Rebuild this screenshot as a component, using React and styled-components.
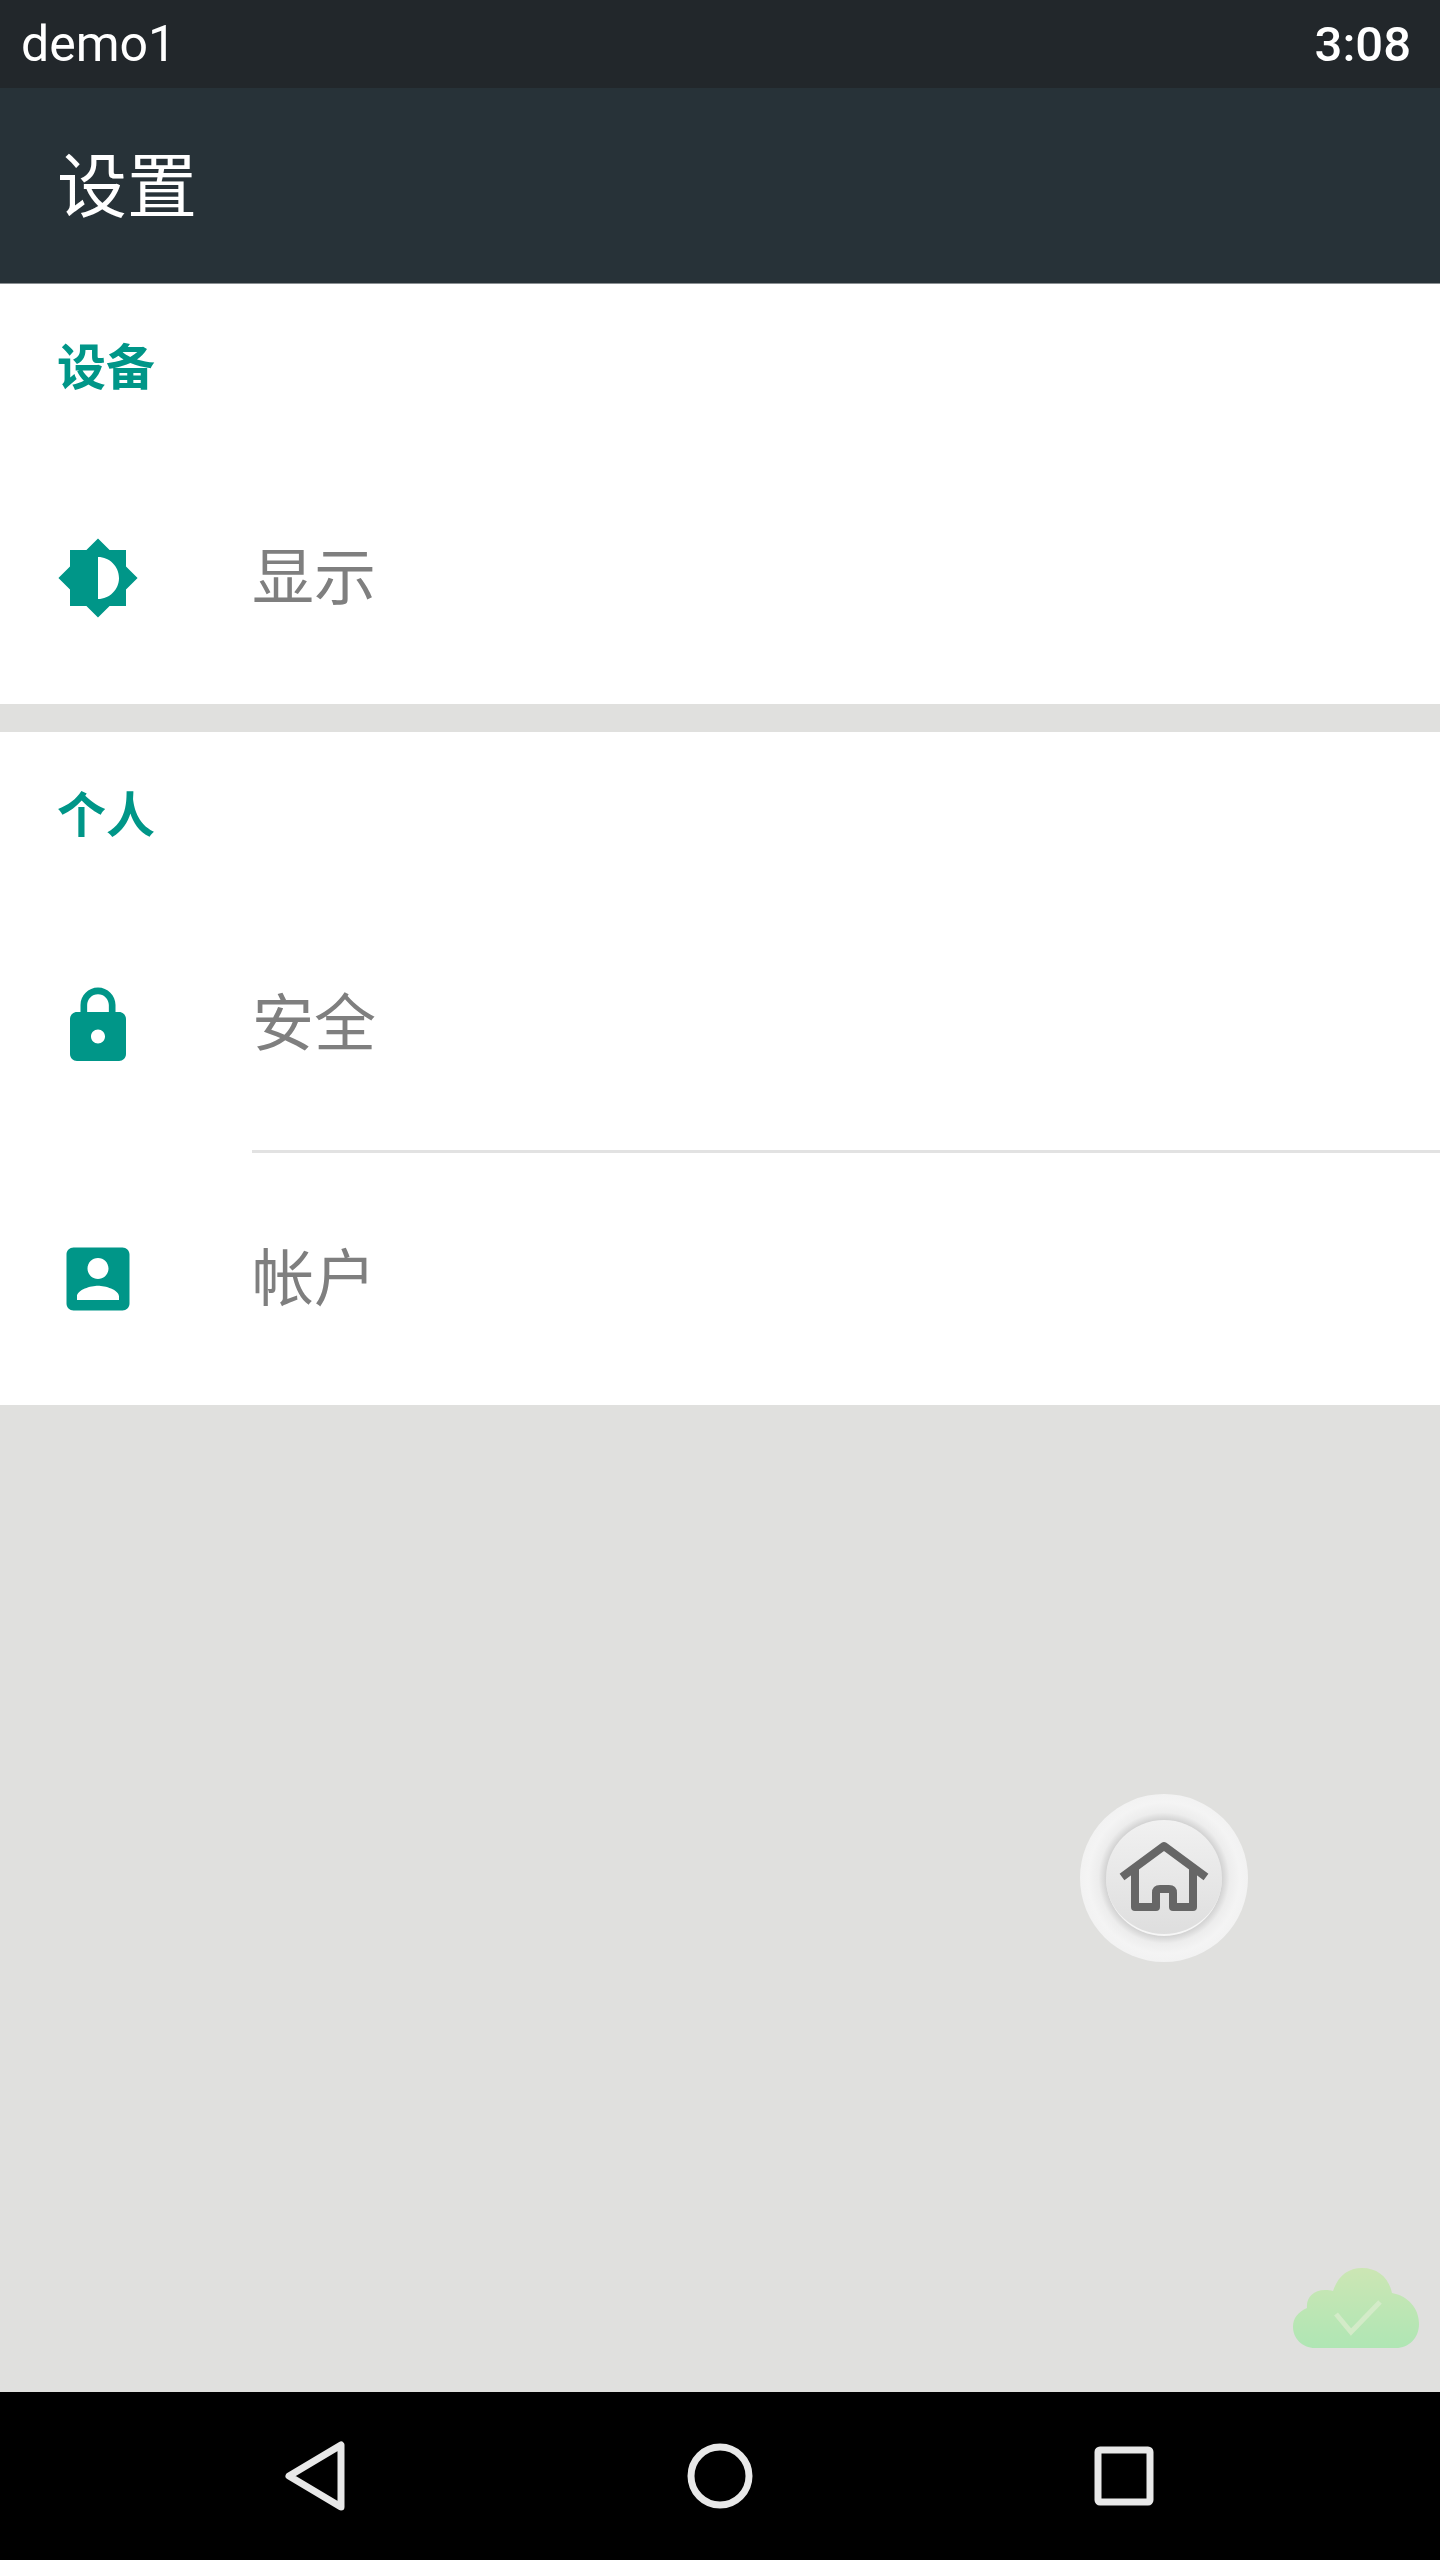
import React from 'react'
import styled, { createGlobalStyle } from 'styled-components'

const GlobalStyle = createGlobalStyle`
  html, body {
    margin: 0;
    padding: 0;
    background: #e0e0de;
  }
`

const Screen = styled.div`
  display: flex;
  flex-direction: column;
  width: 1440px;
  height: 2560px;
  overflow: hidden;
  background: #e0e0de;
  font-family: "Noto Sans CJK SC", Roboto, sans-serif;
`
const StatusBar = styled.div`
  display: flex;
  align-items: center;
  justify-content: space-between;
  height: 88px;
  padding: 0 29px 0 21px;
  box-sizing: border-box;
  background: #22272b;
  color: #fff;
  font-family: Roboto, sans-serif;
  font-size: 50px;
`
const Clock = styled.span`
  font-weight: 500;
  font-size: 49px;
`
const Toolbar = styled.header`
  display: flex;
  align-items: center;
  height: 196px;
  padding: 0 57px 7px;
  box-sizing: border-box;
  background: #273238;
  border-bottom: 1px solid #8a8f92;
`
const Title = styled.h1`
  margin: 0;
  color: #fff;
  font-size: 70px;
  font-weight: 400;
  line-height: 1;
`
const Content = styled.main`
  position: relative;
  flex: 1;
  display: flex;
  flex-direction: column;
  gap: 28px;
`
const Section = styled.section`
  background: #fff;
`
const SectionHeader = styled.h2`
  margin: 0;
  height: ${p => p.$height}px;
  padding: 50px 57px 0;
  box-sizing: border-box;
  color: #009688;
  font-size: 49px;
  font-weight: 700;
  line-height: 60px;
`
const Row = styled.div`
  display: flex;
  align-items: center;
  gap: 112px;
  height: 252px;
  padding-left: 56px;
`
const RowIcon = styled.svg`
  width: 84px;
  height: 84px;
  flex: none;
  fill: #009688;
  margin-top: ${p => p.$nudge || 0}px;
`
const RowLabel = styled.span`
  padding-bottom: 10px;
  color: #7f7f7f;
  font-size: 62px;
  line-height: 1;
`
const Divider = styled.div`
  height: 3px;
  margin-left: 252px;
  background: #e2e2e2;
`
const FloatingHome = styled.div`
  position: absolute;
  left: 1080px;
  top: 1510px;
  width: 168px;
  height: 168px;
  display: flex;
  align-items: center;
  justify-content: center;
  border-radius: 50%;
  background: radial-gradient(circle closest-side, #cfcfcf 0%, #d2d2d2 69%, #ededed 78%, #f4f4f4 90%, #f2f2f2 100%);
`
const HomeButton = styled.div`
  width: 116px;
  height: 116px;
  display: flex;
  align-items: center;
  justify-content: center;
  border-radius: 50%;
  box-sizing: border-box;
  border-bottom: 2px solid #f6f6f6;
  background: linear-gradient(#f1f1f1, #dedede);
`
const HomeIcon = styled.svg`
  width: 92px;
  height: 76px;
  fill: none;
  stroke: #666;
  stroke-width: 8;
  stroke-linejoin: round;
  stroke-linecap: butt;
`
const CloudBadge = styled.svg`
  position: absolute;
  left: 1293px;
  top: 1984px;
  width: 126px;
  height: 80px;
`
const NavBar = styled.nav`
  display: flex;
  align-items: center;
  justify-content: center;
  height: 168px;
  background: #000;
`
const NavItem = styled.div`
  display: flex;
  justify-content: center;
  width: 404px;
`
const NavIcon = styled.svg`
  width: 72px;
  height: 72px;
  fill: none;
  stroke: #e8e8e8;
  stroke-width: 7;
  stroke-linejoin: round;
`

const App = () => {
  return (
    <Screen>
      <GlobalStyle />
      <StatusBar>
        <span>demo1</span>
        <Clock>3:08</Clock>
      </StatusBar>
      <Toolbar>
        <Title>设置</Title>
      </Toolbar>
      <Content>
        <Section>
          <SectionHeader $height={168}>设备</SectionHeader>
          <Row>
            <RowIcon viewBox="0 0 24 24">
              <path d="M20 15.31L23.31 12 20 8.69V4h-4.69L12 .69 8.69 4H4v4.69L.69 12 4 15.31V20h4.69L12 23.31 15.31 20H20v-4.69zM12 18V6c3.31 0 6 2.69 6 6s-2.69 6-6 6z" />
            </RowIcon>
            <RowLabel>显示</RowLabel>
          </Row>
        </Section>
        <Section>
          <SectionHeader $height={166}>个人</SectionHeader>
          <Row>
            <RowIcon viewBox="0 0 24 24" $nudge={4}>
              <path d="M18 8h-1V6c0-2.76-2.24-5-5-5S7 3.24 7 6v2H6c-1.1 0-2 .9-2 2v10c0 1.1.9 2 2 2h12c1.1 0 2-.9 2-2V10c0-1.1-.9-2-2-2zm-6 9c-1.1 0-2-.9-2-2s.9-2 2-2 2 .9 2 2-.9 2-2 2zm3.1-9H8.9V6c0-1.71 1.39-3.1 3.1-3.1 1.71 0 3.1 1.39 3.1 3.1v2z" />
            </RowIcon>
            <RowLabel>安全</RowLabel>
          </Row>
          <Divider />
          <Row>
            <RowIcon viewBox="0 0 24 24">
              <path d="M3 5v14c0 1.1.89 2 2 2h14c1.1 0 2-.9 2-2V5c0-1.1-.9-2-2-2H5c-1.11 0-2 .9-2 2zm12 4c0 1.66-1.34 3-3 3s-3-1.34-3-3 1.34-3 3-3 3 1.34 3 3zm-9 8c0-2 4-3.1 6-3.1s6 1.1 6 3.1v1H6v-1z" />
            </RowIcon>
            <RowLabel>帐户</RowLabel>
          </Row>
        </Section>
        <FloatingHome>
          <HomeButton>
            <HomeIcon viewBox="69 66 92 76">
              <path d="M73 104L115 73L157 104" />
              <path d="M86 95V134H107V120Q107 116 111 116H120Q124 116 124 120V134H144V95" />
            </HomeIcon>
          </HomeButton>
        </FloatingHome>
        <CloudBadge viewBox="23 28 126 80">
          <defs>
            <linearGradient id="cloudFill" x1="0" y1="0" x2="0" y2="1">
              <stop offset="0" stopColor="#cce6b4" />
              <stop offset="1" stopColor="#afe6b4" />
            </linearGradient>
          </defs>
          <path
            d="M45 108C32 108 23 98 23 87C23 78 28 72 37 68C36 58 43 50 55 50C58 50 61 50 63 51C68 36 78 28 92 28C108 28 119 38 122 53C138 56 149 68 149 84C149 98 139 108 126 108Z"
            fill="url(#cloudFill)"
          />
          <path d="M66 74L81 92L110 62" fill="none" stroke="#d3ebc8" strokeWidth="5" />
        </CloudBadge>
      </Content>
      <NavBar>
        <NavItem>
          <NavIcon viewBox="0 0 72 72">
            <path d="M61 5V67L9 36Z" />
          </NavIcon>
        </NavItem>
        <NavItem>
          <NavIcon viewBox="0 0 72 72">
            <circle cx="36" cy="36" r="29" />
          </NavIcon>
        </NavItem>
        <NavItem>
          <NavIcon viewBox="0 0 72 72">
            <rect x="10" y="10" width="52" height="52" rx="2" />
          </NavIcon>
        </NavItem>
      </NavBar>
    </Screen>
  )
}

export default App
